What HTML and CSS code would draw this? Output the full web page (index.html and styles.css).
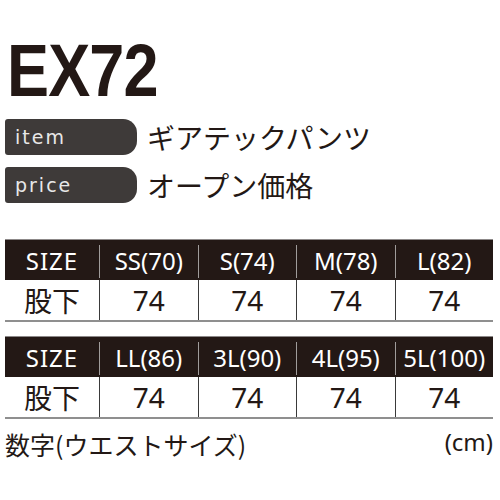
FILE: index.html
```html
<!DOCTYPE html>
<html lang="ja">
<head>
<meta charset="utf-8">
<link rel="stylesheet" href="styles.css">
</head>
<body>
<div class="page">
  <h1 class="title"><span class="title-text">EX72</span></h1>
  <div class="info">
    <div class="info-row"><span class="pill">item</span><span class="info-value">ギアテックパンツ</span></div>
    <div class="info-row"><span class="pill">price</span><span class="info-value">オープン価格</span></div>
  </div>
  <div class="size-table">
    <div class="row head">
      <div class="cell first size-label">SIZE</div>
      <div class="cell">SS(70)</div>
      <div class="cell">S(74)</div>
      <div class="cell">M(78)</div>
      <div class="cell">L(82)</div>
    </div>
    <div class="row body">
      <div class="cell first jp">股下</div>
      <div class="cell">74</div>
      <div class="cell">74</div>
      <div class="cell">74</div>
      <div class="cell">74</div>
    </div>
  </div>
  <div class="size-table second">
    <div class="row head">
      <div class="cell first size-label">SIZE</div>
      <div class="cell">LL(86)</div>
      <div class="cell">3L(90)</div>
      <div class="cell">4L(95)</div>
      <div class="cell">5L(100)</div>
    </div>
    <div class="row body">
      <div class="cell first jp">股下</div>
      <div class="cell">74</div>
      <div class="cell">74</div>
      <div class="cell">74</div>
      <div class="cell">74</div>
    </div>
  </div>
  <div class="footer">
    <span class="note">数字(ウエストサイズ)</span>
    <span class="unit">(cm)</span>
  </div>
</div>
</body>
</html>
```

FILE: styles.css
```css
html, body {
  margin: 0;
  padding: 0;
  background: #ffffff;
}

.page {
  width: 500px;
  height: 500px;
  box-sizing: border-box;
  padding: 33px 7px 0 5px;
  color: #231815;
  font-family: "Noto Sans", "Noto Sans CJK JP", sans-serif;
  overflow: hidden;
}

.title {
  margin: 0;
  height: 75px;
  font-family: "Liberation Sans", Arial, sans-serif;
  font-weight: bold;
  font-size: 75px;
  line-height: 75px;
  letter-spacing: -1px;
  padding-left: 2px;
}

.title-text {
  display: inline-block;
  transform: scaleX(0.84);
  transform-origin: left center;
}

.info {
  margin-top: 11px;
  display: flex;
  flex-direction: column;
  gap: 12px;
}

.info-row {
  display: flex;
  align-items: center;
  gap: 10px;
  height: 36px;
}

.pill {
  width: 132px;
  height: 36px;
  box-sizing: border-box;
  padding-left: 10px;
  background: #3e3a39;
  border-radius: 3px 14px 14px 3px;
  color: #e8e8e8;
  font-family: "DejaVu Sans", sans-serif;
  font-size: 19px;
  letter-spacing: 2px;
  line-height: 36px;
}

.info-value {
  font-family: "Noto Sans CJK JP", sans-serif;
  font-size: 28px;
  line-height: 36px;
  color: #231815;
}

.size-table {
  margin-top: 36px;
}

.size-table.second {
  margin-top: 14px;
}

.row {
  display: grid;
  grid-template-columns: 94px repeat(4, 1fr);
}

.row.head {
  background: #231815;
  color: #ffffff;
  padding: 5px 0 2px;
  border-top: 1px solid #8c8888;
  height: 41px;
  box-sizing: border-box;
}

.row.head .cell {
  font-size: 24px;
  line-height: 32px;
  height: 33px;
  border-left: 1px solid #a09c9b;
}

.row.head .cell.first {
  border-left: none;
}

.size-label {
  letter-spacing: 1px;
}

.row.body {
  height: 42px;
  box-sizing: border-box;
  border-bottom: 2px solid #8f8f8f;
}

.row.body .cell {
  font-size: 28px;
  line-height: 40px;
  border-left: 1px solid #3a3a3a;
}

.row.body .cell.first {
  border-left: none;
}

.cell {
  text-align: center;
  white-space: nowrap;
}

.cell.jp {
  font-family: "Noto Sans CJK JP", sans-serif;
  font-size: 26px;
}

.footer {
  margin-top: 12px;
  display: flex;
  justify-content: space-between;
  align-items: flex-start;
}

.note {
  font-family: "Noto Sans CJK JP", sans-serif;
  font-size: 25px;
  line-height: 26px;
}

.unit {
  font-family: "Noto Sans", sans-serif;
  font-size: 24px;
  line-height: 22px;
}
```
